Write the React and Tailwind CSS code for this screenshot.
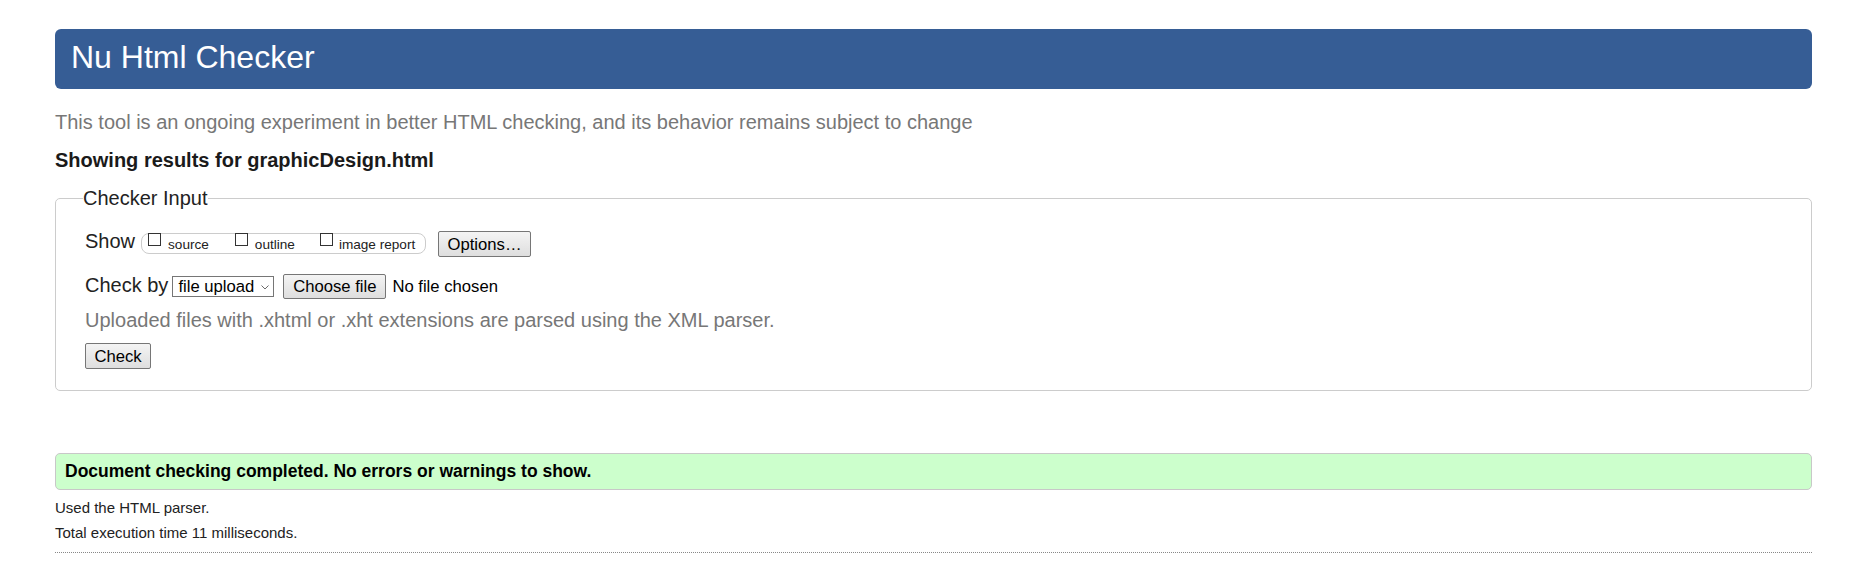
import React from "react";

function Btn({ children, className = "" }) {
  return (
    <span
      className={
        "flex items-center justify-center border border-[#767676] rounded-[2px] bg-linear-to-b from-[#f4f4f4] to-[#dedede] text-[16.67px] leading-[19px] text-black " +
        className
      }
    >
      {children}
    </span>
  );
}

function Box() {
  return <span className="block w-[13px] h-[13px] border border-[#333] bg-white shrink-0" />;
}

export default function App() {
  return (
    <div
      className="bg-white min-h-[563px] text-[#222]"
      style={{ fontFamily: '"Liberation Sans", Arial, sans-serif' }}
    >
      <div className="ml-[55px] mr-[44px] pt-[29px] pb-[12px]">
        <h1 className="h-[60px] pt-[10px] pl-[16px] rounded-[6px] bg-[#365d95] text-white text-[32px] leading-[37px] font-normal">
          Nu Html Checker
        </h1>

        <p className="mt-[22px] text-[20px] leading-[23px] text-[#777]">
          This tool is an ongoing experiment in better HTML checking, and its behavior remains subject to change
        </p>

        <p className="mt-[15px] text-[20px] leading-[23px] font-bold text-[#1a1a1a]">
          Showing results for graphicDesign.html
        </p>

        <fieldset className="mt-[15px] border border-[#cccccc] rounded-[5px] pl-[29px] pr-[30px] pt-[19px] pb-[21px]">
          <legend className="ml-[-2px] text-[20px] leading-[23px] text-[#222]">Checker Input</legend>

          <div className="flex items-start h-[28px]">
            <span className="mt-[1px] text-[20px] leading-[23px]">Show</span>
            <span className="ml-[6px] mt-[4px] flex items-start h-[21px] w-[285px] border border-[#cccccc] rounded-[8px] pl-[6px] text-[13.6px] leading-[15px]">
              <span className="mt-[-1px]"><Box /></span>
              <span className="ml-[7px] mt-[3px]">source</span>
              <span className="ml-[26px] mt-[-1px]"><Box /></span>
              <span className="ml-[7px] mt-[3px]">outline</span>
              <span className="ml-[25px] mt-[-1px]"><Box /></span>
              <span className="ml-[6px] mt-[3px]">image report</span>
            </span>
            <Btn className="ml-[12px] mt-[2px] w-[93px] h-[26px]">Options…</Btn>
          </div>

          <div className="flex items-start h-[25px] mt-[17px]">
            <span className="text-[20px] leading-[23px]">Check by</span>
            <span className="ml-[4px] mt-[2px] flex items-center h-[21px] w-[102px] border border-[#767676] bg-white pl-[5px] pr-[4px] text-[16.67px] leading-[19px] text-black">
              <span className="flex-1">file upload</span>
              <svg width="8" height="5" viewBox="0 0 8 5" className="mt-[1px]">
                <path d="M0.5 0.5 L4 4 L7.5 0.5" fill="none" stroke="#6b6b6b" strokeWidth="1" />
              </svg>
            </span>
            <Btn className="ml-[9px] w-[103px] h-[25px]">Choose file</Btn>
            <span className="ml-[6px] mt-[3px] text-[16.67px] leading-[19px] text-black">No file chosen</span>
          </div>

          <p className="mt-[10px] text-[20px] leading-[23px] text-[#777]">
            Uploaded files with .xhtml or .xht extensions are parsed using the XML parser.
          </p>

          <div className="mt-[11px] flex">
            <Btn className="w-[66px] h-[26px]">Check</Btn>
          </div>
        </fieldset>

        <div className="mt-[62px] h-[37px] border border-[#c8c8c8] rounded-[5px] bg-[#ccffcc] pl-[9px] pt-[7px] text-[17.5px] leading-[20px] font-bold text-black">
          Document checking completed. No errors or warnings to show.
        </div>

        <p className="mt-[9px] text-[15px] leading-[17px] text-[#222]">Used the HTML parser.</p>
        <p className="mt-[8px] text-[15px] leading-[17px] text-[#222]">Total execution time 11 milliseconds.</p>

        <div className="mt-[11px] border-t border-dotted border-[#888]" />
      </div>
    </div>
  );
}
